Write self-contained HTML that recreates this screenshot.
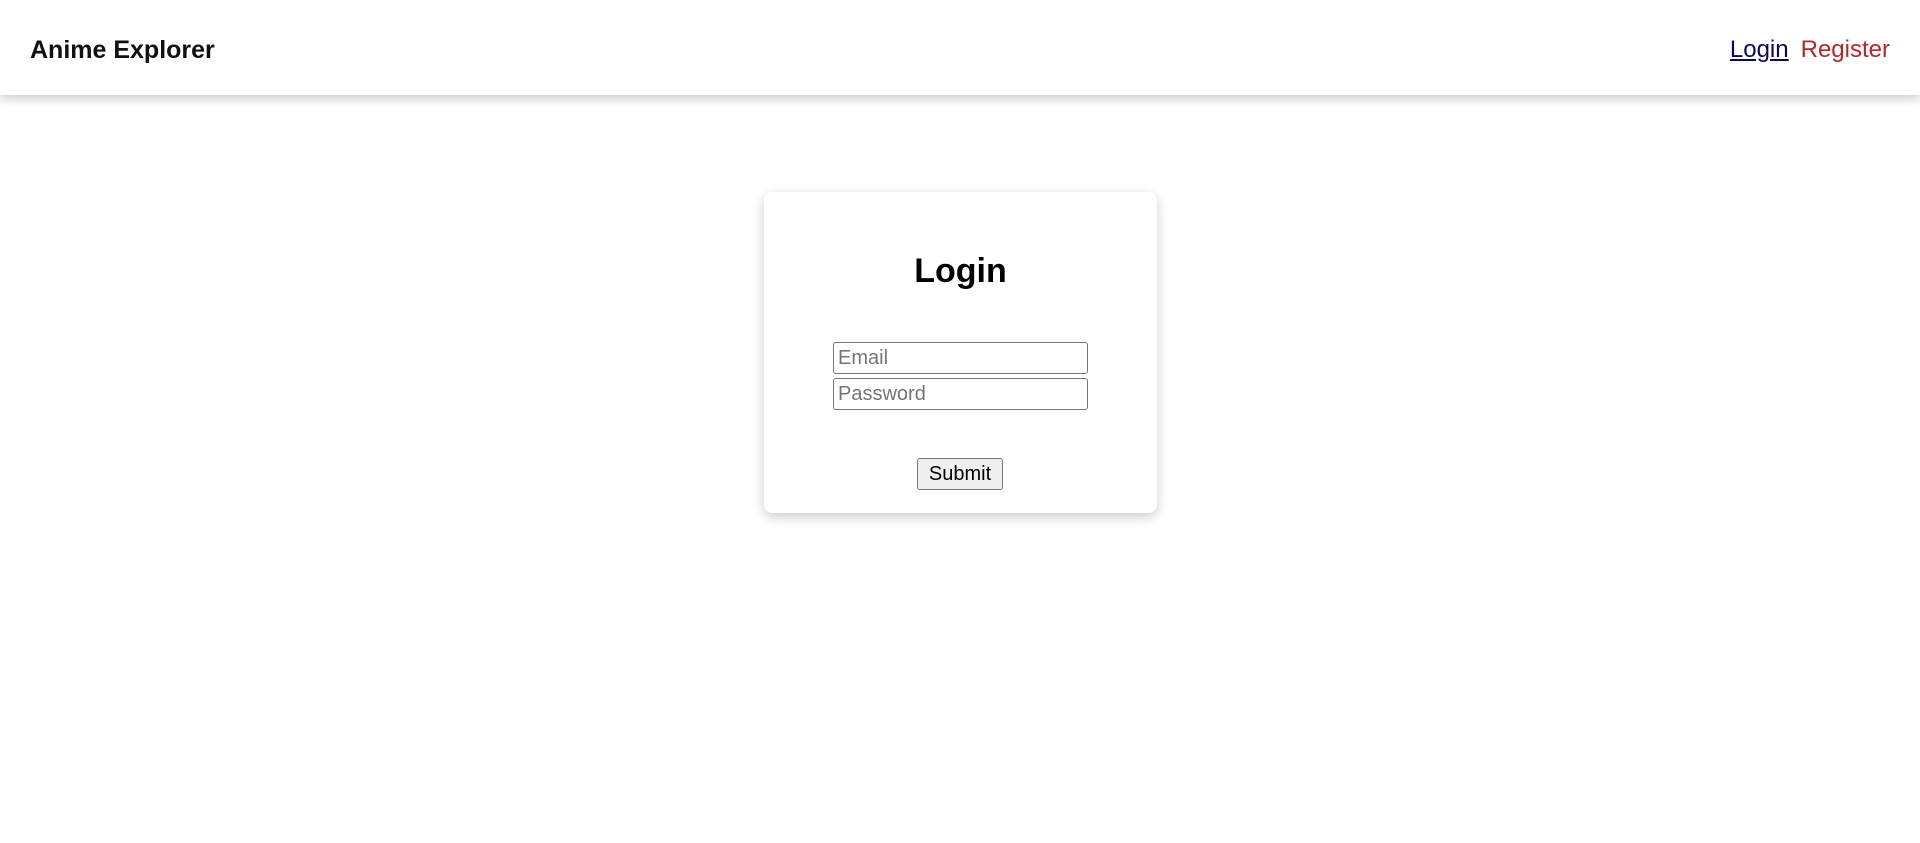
<!DOCTYPE html>
<html><head><style>
body{margin:0;width:1920px;height:843px;background:#fff;font-family:"Liberation Sans",sans-serif;overflow:hidden}
.hdr{position:absolute;left:0;top:0;width:1920px;height:95px;background:#fff;box-shadow:0 4px 10px rgba(0,0,0,.2)}
.brand{position:absolute;left:30px;top:36px;font-size:25px;font-weight:bold;color:#111;}
.nav{position:absolute;right:30px;top:36px;font-size:24px}
.nav a{margin-left:12px}
.l{color:#0a0a50;text-decoration:underline}
.r{color:#b0282a;text-decoration:none}
.card{position:absolute;left:764px;top:192px;width:393px;height:321px;background:#fff;border-radius:8px;box-shadow:0 4px 12px rgba(0,0,0,.2)}
h1{position:absolute;margin:0;width:100%;text-align:center;top:60px;font-size:34px;font-weight:bold}
input{position:absolute;left:69px;width:255px;height:32px;box-sizing:border-box;border:1px solid #767676;border-radius:3px;font-size:20px;font-family:"Liberation Sans",sans-serif;padding:0 4px}
input::placeholder{color:#757575}
button{position:absolute;left:153px;top:266px;width:86px;height:32px;font-size:20px;font-family:"Liberation Sans",sans-serif;background:#efefef;border:1px solid #767676;border-radius:3px;padding:0}
</style></head><body>
<div class="hdr"><div class="brand">Anime Explorer</div>
<div class="nav"><a class="l">Login</a><a class="r">Register</a></div></div>
<div class="card"><h1>Login</h1>
<input style="top:150px" placeholder="Email">
<input style="top:186px" placeholder="Password">
<button>Submit</button></div>
</body></html>
